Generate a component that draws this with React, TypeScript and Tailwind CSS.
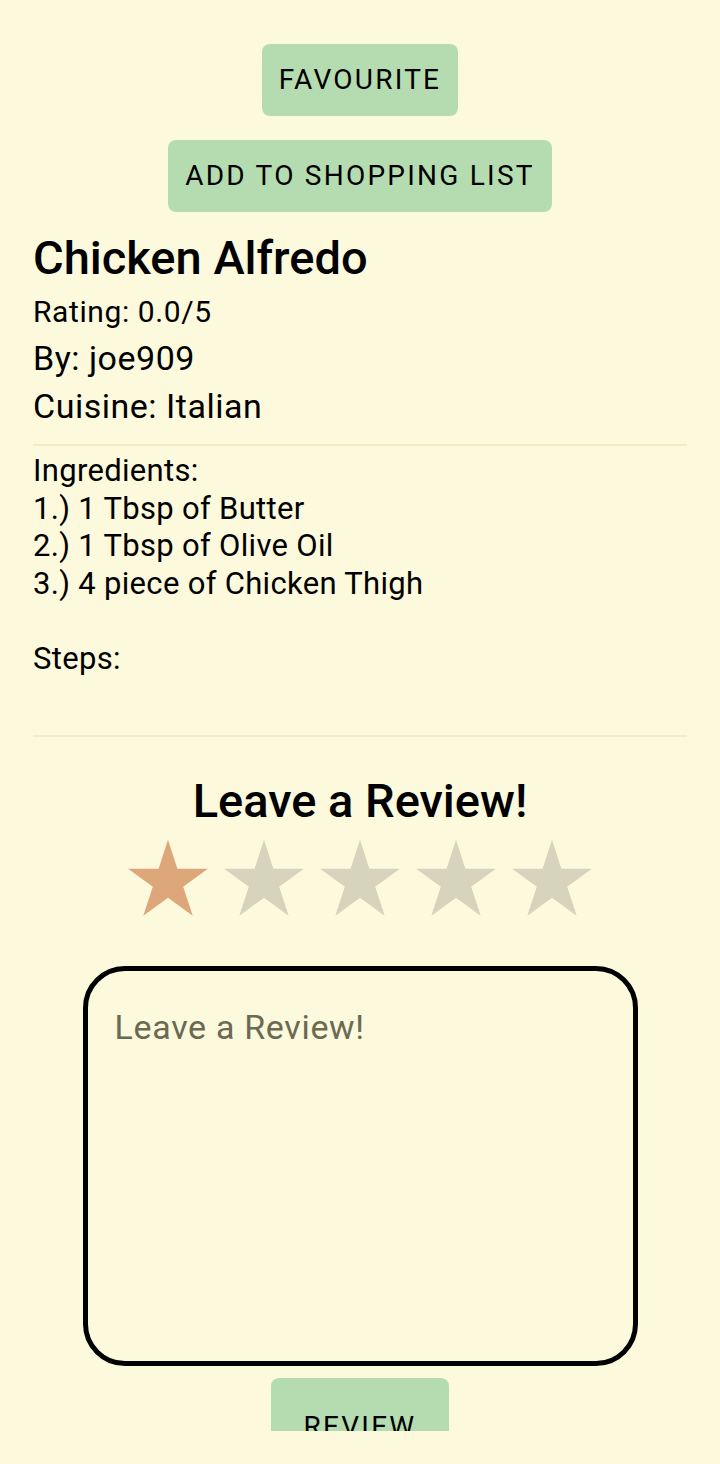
import React, { useState } from "react";

const STAR_POINTS = "50,2 61.2,36.5 97.5,36.5 68.1,57.9 79.4,92.4 50,71.1 20.6,92.4 31.9,57.9 2.5,36.5 38.8,36.5";

const Star: React.FC<{ filled: boolean; onClick: () => void }> = ({ filled, onClick }) => (
  <button type="button" onClick={onClick} className="w-[84px] h-[84px] flex items-center justify-center">
    <svg viewBox="0 0 100 95" className="w-[84px] h-[80px]">
      <polygon points={STAR_POINTS} fill={filled ? "#dea77a" : "#d6d4bd"} />
    </svg>
  </button>
);

const App: React.FC = () => {
  const [rating, setRating] = useState(1);
  const [review, setReview] = useState("");

  const ingredients = ["1 Tbsp of Butter", "1 Tbsp of Olive Oil", "4 piece of Chicken Thigh"];

  return (
    <div className="w-[720px] h-[1464px] bg-[#fcf9dc] text-black" style={{ fontFamily: "Roboto, 'Noto Sans', sans-serif" }}>
      <div className="h-[1431px] overflow-hidden flex flex-col">
        {/* Actions */}
        <div className="flex flex-col items-center pt-[44px] gap-[24px]">
          <button className="h-[72px] px-[17px] rounded-[8px] bg-[#b5dcb0] text-[28px] tracking-[0.08em] uppercase">
            Favourite
          </button>
          <button className="h-[72px] px-[17px] rounded-[8px] bg-[#b5dcb0] text-[28px] tracking-[0.08em] uppercase">
            Add to Shopping List
          </button>
        </div>

        {/* Recipe details */}
        <div className="px-[33px]">
          <h1 className="text-[47px] font-medium leading-[56px] mt-[18px]">Chicken Alfredo</h1>
          <p className="text-[30px] leading-[44px] mt-[4px] tracking-[0.02em]">Rating: 0.0/5</p>
          <p className="text-[34px] leading-[48px] tracking-[0.015em]">By: joe909</p>
          <p className="text-[34px] leading-[48px] tracking-[0.015em]">Cuisine: Italian</p>
          <div className="h-[2px] bg-[#f4ecc8] mt-[14px]" />
          <div className="text-[31px] leading-[37.5px] tracking-[0.01em] mt-[6px]">
            <p>Ingredients:</p>
            {ingredients.map((item, i) => (
              <p key={item}>{`${i + 1}.) ${item}`}</p>
            ))}
            <p>&nbsp;</p>
            <p>Steps:</p>
            <p>&nbsp;</p>
          </div>
          <div className="h-[2px] bg-[#f4ecc8] mt-[20px]" />
        </div>

        {/* Review */}
        <div className="flex flex-col items-center">
          <h2 className="text-[47px] font-medium leading-[56px] mt-[36px]">Leave a Review!</h2>
          <div className="flex gap-[12px] mt-[7px]">
            {[1, 2, 3, 4, 5].map((n) => (
              <Star key={n} filled={n <= rating} onClick={() => setRating(n)} />
            ))}
          </div>
          <textarea
            value={review}
            onChange={(e) => setReview(e.target.value)}
            placeholder="Leave a Review!"
            className="mt-[46px] w-[555px] h-[400px] border-[5px] border-black rounded-[42px] bg-transparent px-[27px] pt-[36px] text-[34px] leading-[40px] tracking-[0.02em] resize-none outline-none placeholder:text-[#6a6954]"
          />
          <button className="mt-[12px] w-[178px] h-[72px] shrink-0 rounded-[8px] bg-[#b5dcb0] text-[28px] tracking-[0.08em] uppercase pt-[33px] leading-[32px] flex justify-center items-start">
            Review
          </button>
        </div>
      </div>
    </div>
  );
};

export default App;
